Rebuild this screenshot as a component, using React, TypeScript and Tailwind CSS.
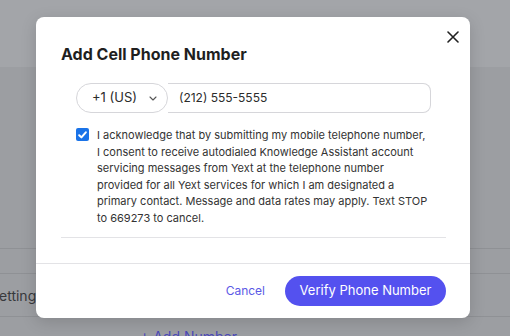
import React from "react";

const lines = [
  "I acknowledge that by submitting my mobile telephone number,",
  "I consent to receive autodialed Knowledge Assistant account",
  "servicing messages from Yext at the telephone number",
  "provided for all Yext services for which I am designated a",
  "primary contact. Message and data rates may apply. Text STOP",
  "to 669273 to cancel.",
];

export default function App() {
  return (
    <div className="relative w-[510px] h-[336px] overflow-hidden bg-[#9c9ea2]" style={{ fontFamily: "Inter, 'Noto Sans', sans-serif" }}>
      {/* page beneath */}
      <div className="flex flex-col">
        <div className="h-[67px] bg-[#a3a5a9]" />
        <div className="h-[182px] border-b border-[#8f9195]" />
        <div className="h-[25px] border-b border-[#8f9195]" />
        <div className="h-[43px] border-b border-[#8f9195] flex items-center text-[14px] text-[#38393c]">
          <span className="-ml-[1px]">etting</span>
        </div>
        <div className="pl-[140px] pt-[10px] text-[14px] leading-[20px] text-[#4b49b8]">+ Add Number</div>
      </div>

      {/* modal */}
      <div className="absolute left-[36px] top-[17px] w-[434px] h-[301px] bg-white rounded-[8px] shadow-[0_4px_16px_rgba(0,0,0,0.15)] flex flex-col">
        <button className="absolute left-[411px] top-[14px] w-[12px] h-[12px] text-[#222]">
          <svg viewBox="0 0 12 12" width="12" height="12" fill="none" stroke="currentColor" strokeWidth="1.6" strokeLinecap="round">
            <path d="M1 1L11 11M11 1L1 11" />
          </svg>
        </button>
        <div className="px-[25px] pt-[25px] flex-1">
          <h2 className="text-[16px] leading-[24px] font-bold text-[#1f1f1f]">Add Cell Phone Number</h2>
          <div className="mt-[17px] ml-[15px] flex h-[30px] w-[355px]">
            <div className="w-[92px] h-full rounded-full border border-[#d6d6da] flex items-center pl-[15px] text-[13px] text-[#2b2b2b]">
              <span>+1 (US)</span>
              <svg className="ml-[12px]" width="8" height="5" viewBox="0 0 8 5" fill="none" stroke="#555" strokeWidth="1.1" strokeLinecap="round" strokeLinejoin="round">
                <path d="M1 1L4 4L7 1" />
              </svg>
            </div>
            <div className="flex-1 h-full rounded-r-[8px] border border-l-0 border-[#d6d6da] flex items-center pl-[11px] text-[12px] text-[#2b2b2b]">
              (212) 555-5555
            </div>
          </div>
          <div className="mt-[14px] ml-[15px] flex items-start">
            <div className="mt-[1px] w-[13px] h-[13px] rounded-[2px] bg-[#1a73e8] flex items-center justify-center shrink-0">
              <svg width="9" height="8" viewBox="0 0 9 8" fill="none" stroke="white" strokeWidth="2" strokeLinecap="round" strokeLinejoin="round">
                <path d="M1.2 4.2L3.4 6.4L7.8 1.3" />
              </svg>
            </div>
            <p className="ml-[8px] w-[340px] text-[11px] leading-[16.5px] text-[#333]">
              {lines.map((l, i) => (
                <span key={i} className="block whitespace-nowrap">{l}</span>
              ))}
            </p>
          </div>
          <div className="mt-[11px] h-px w-[385px] bg-[#e3e3e6]" />
        </div>
        <div className="h-[55px] border-t border-[#e3e3e6] flex items-center justify-end pr-[24px]">
          <button className="text-[12px] text-[#5b59e6] mr-[20px]">Cancel</button>
          <button className="h-[30px] w-[161px] rounded-full bg-[#5451ef] text-white text-[13px]">Verify Phone Number</button>
        </div>
      </div>
    </div>
  );
}
